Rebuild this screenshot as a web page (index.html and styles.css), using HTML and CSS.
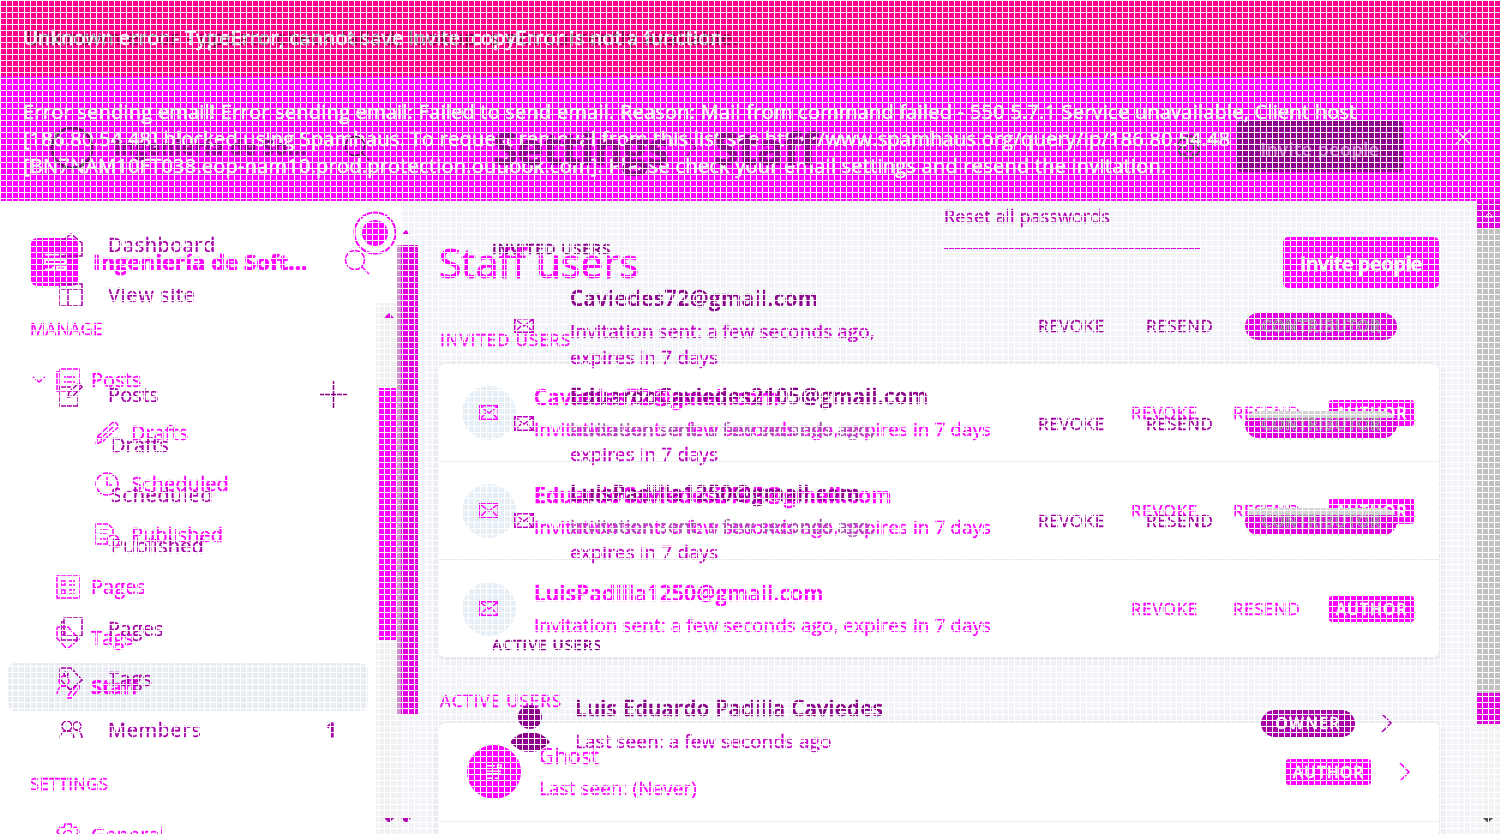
FILE: index.html
```html
<!DOCTYPE html>
<html lang="es">
<head>
<meta charset="utf-8">
<title>Staff users</title>
<link rel="stylesheet" href="styles.css">
</head>
<body>
<svg class="defs" width="0" height="0">
  <symbol id="mail" viewBox="0 0 20 15"><path d="M.7.7h18.6v13.6H.7zM1 1l9 7 9-7M1 14l6-6M19 14l-6-6"/></symbol>
  <symbol id="search" viewBox="0 0 26 26"><circle cx="11" cy="11" r="9.5"/><path d="M18 18l7 7"/></symbol>
  <symbol id="close" viewBox="0 0 18 18"><path d="M1 1l16 16M17 1L1 17"/></symbol>
  <symbol id="chev" viewBox="0 0 12 20"><path d="M1 1l9 9-9 9"/></symbol>
  <symbol id="tag" viewBox="0 0 24 24"><path d="M1 2v10l10 11 12-10L12 1H2z"/><circle cx="7" cy="7" r="2"/></symbol>
  <symbol id="gear" viewBox="0 0 24 24"><circle cx="12" cy="12" r="4.5"/><path d="M9 1h6l1 4 4-1 3 5-3 3 3 3-3 5-4-1-1 4H9l-1-4-4 1-3-5 3-3-3-3 3-5 4 1z"/></symbol>
</svg>
<div class="screen">
  <div class="banners">
    <div class="banner banner-top"></div>
    <div class="banner banner-error"></div>
  </div>

  <div class="app">
    <aside class="side">
      <header class="site">
        <span class="logo"><svg viewBox="0 0 24 20"><path d="M1 2h22M1 8h22v4H1zM1 18h9v-3M14 18h9v-3H14z"/></svg></span>
        <span class="site-name">Ingeniería de Soft...</span>
        <svg class="i26"><use href="#search"/></svg>
      </header>
      <div class="navwrap">
        <nav class="nav">
          <h4>MANAGE</h4>
          <a class="row posts"><svg class="arrow" viewBox="0 0 14 8"><path d="M1 1l6 5 6-5"/></svg><svg class="i24" viewBox="0 0 24 24"><path d="M4 1h19v22H1V4h3M4 1v22M8 9h11M8 14h11"/></svg><span>Posts</span></a>
          <a class="row sub"><svg class="i24" viewBox="0 0 24 24"><path d="M1 23l2-8L17 2q3-2 5 1t-1 5L8 20zM5 18L19 5M3 15l5 5"/></svg><span>Drafts</span></a>
          <a class="row sub"><svg class="i24" viewBox="0 0 24 24"><circle cx="12" cy="12" r="11"/><path d="M12 5v8h5"/></svg><span class="sched">Scheduled</span></a>
          <a class="row sub"><svg class="i24" viewBox="0 0 24 24"><path d="M12 21H1V1h12l5 5v5M5 6h8M5 11h7M5 16h6"/><circle cx="18" cy="18" r="6"/></svg><span>Published</span></a>
          <a class="row pages"><svg class="i24" viewBox="0 0 24 24"><path d="M1 1h22v22H1zM5 6h4v4H5zM5 15h4v4H5zM13 6h6M13 10h6M13 15h6M13 19h6"/></svg><span>Pages</span></a>
          <a class="row tags"><svg class="i24"><use href="#tag"/></svg><span>Tags</span></a>
          <a class="row active"><svg class="i24" viewBox="0 0 24 24"><circle cx="8" cy="6" r="5"/><path d="M1 19q1-8 7-8t7 7M12 23l1-4L22 9l2 3-9 11z"/></svg><span>Staff</span></a>
          <h4 class="settings">SETTINGS</h4>
          <a class="row general"><svg class="i24"><use href="#gear"/></svg><span>General</span></a>
        </nav>
        <div class="bar"><i class="up"></i><div class="thumb"></div><i class="down"></i></div>
      </div>
    </aside>

    <main class="main">
      <header class="title"><h1>Staff users</h1><button>Invite people</button></header>
      <h3>INVITED USERS</h3>
      <section class="card">
        <div class="user"><span class="avatar"><svg><use href="#mail"/></svg></span><div class="who"><b>Caviedes72@gmail.com</b><p>Invitation sent: a few seconds ago, expires in 7 days</p></div><span class="act revoke">REVOKE</span><span class="act resend">RESEND</span><span class="badge">AUTHOR</span></div>
        <div class="user"><span class="avatar"><svg><use href="#mail"/></svg></span><div class="who"><b>EduardoCaviedes2105@gmail.com</b><p>Invitation sent: a few seconds ago, expires in 7 days</p></div><span class="act revoke">REVOKE</span><span class="act resend">RESEND</span><span class="badge">AUTHOR</span></div>
        <div class="user"><span class="avatar"><svg><use href="#mail"/></svg></span><div class="who"><b>LuisPadilla1250@gmail.com</b><p>Invitation sent: a few seconds ago, expires in 7 days</p></div><span class="act revoke">REVOKE</span><span class="act resend">RESEND</span><span class="badge">AUTHOR</span></div>
      </section>
      <h3 class="active-title">ACTIVE USERS</h3>
      <section class="card">
        <div class="user ghost"><span class="avatar"><svg viewBox="0 0 18 18"><path d="M1 2h9M13 1h4v3h-4zM1 8h16M1 11h16M1 16h6M10 16h4"/></svg></span><div class="who"><b>Ghost</b><p>Last seen: (Never)</p></div><span class="badge">AUTHOR</span><svg class="chev"><use href="#chev"/></svg></div>
        <div class="user"></div>
      </section>
    </main>
    <div class="pagebar"><div class="p1"><svg viewBox="0 0 10 6"><path d="M1 5l4-4 4 4z"/></svg></div><div class="p2"></div><div class="p3"></div><i class="down"></i></div>
  </div>

  <div class="classic">
    <aside class="cside">
      <header><svg class="ring" viewBox="0 0 44 44"><circle cx="22" cy="22" r="20"/></svg><span>Ingeniería de So...</span><svg class="i26"><use href="#search"/></svg></header>
      <a class="crow"><svg class="i24" viewBox="0 0 24 24"><path d="M1 10L12 1l11 9v13H1z"/></svg><span>Dashboard</span></a>
      <a class="crow"><svg class="i24" viewBox="0 0 24 24"><path d="M1 1h22v22H1zM1 6h22M9 6v17"/></svg><span class="vs">View site</span></a>
      <a class="crow cposts"><svg class="i24" viewBox="0 0 24 24"><path d="M12 4H1v19h18V12M9 14l1-5L20 0l3 4-9 9z"/></svg><span>Posts</span><svg class="plus" viewBox="0 0 27 27"><path d="M13.500 0v27M0 13.500h27"/></svg></a>
      <a class="crow csub"><span>Drafts</span></a>
      <a class="crow csub"><span class="sch">Scheduled</span></a>
      <a class="crow csub"><span>Published</span></a>
      <a class="crow cpages"><svg class="i24" viewBox="0 0 24 24"><path d="M5 1h18v18H5zM5 5H2v18h16v-4"/></svg><span>Pages</span></a>
      <a class="crow"><svg class="i24"><use href="#tag"/></svg><span>Tags</span></a>
      <a class="crow"><svg class="i24" viewBox="0 0 24 24"><circle cx="8" cy="8" r="5"/><circle cx="18" cy="8" r="4"/><path d="M1 21q0-8 7-8t7 8M16 12q7 0 7 9"/></svg><span class="vs">Members</span><em>1</em></a>
    </aside>
    <svg class="globe" viewBox="0 0 44 44"><circle cx="22" cy="22" r="20.500"/><circle cx="22" cy="22" r="12" class="core"/></svg>
    <div class="cbar"><i class="up"></i><div class="thumb"></div><i class="down"></i></div>
    <div class="cmain">
      <header><h2>Settings</h2><svg class="chev"><use href="#chev"/></svg><h2>Staff</h2><svg class="i24 cog"><use href="#gear"/></svg><button>Invite people</button></header>
      <div class="reset">Reset all passwords</div>
      <h5>INVITED USERS</h5>
      <div class="cuser"><svg class="mail"><use href="#mail"/></svg><div class="cwho"><b class="wide">Caviedes72@gmail.com</b><p>Invitation sent: a few seconds ago,<br>expires in 7 days</p></div><span class="act">REVOKE</span><span class="act cresend">RESEND</span><span class="pill">CONTRIBUTOR</span></div>
      <div class="cuser over"><svg class="mail"><use href="#mail"/></svg><div class="cwho"><b>EduardoCaviedes2105@gmail.com</b><p>Invitation sent: a few seconds ago,<br>expires in 7 days</p></div><span class="act">REVOKE</span><span class="act cresend">RESEND</span><span class="pill">CONTRIBUTOR</span></div>
      <div class="cuser over"><svg class="mail"><use href="#mail"/></svg><div class="cwho"><b>LuisPadilla1250@gmail.com</b><p>Invitation sent: a few seconds ago,<br>expires in 7 days</p></div><span class="act">REVOKE</span><span class="act cresend">RESEND</span><span class="pill">CONTRIBUTOR</span></div>
      <h5 class="cactive">ACTIVE USERS</h5>
      <div class="cowner"><svg class="person" viewBox="0 0 40 48"><circle cx="20" cy="12" r="12"/><path d="M0 37Q8 27 20 27t20 10Q32 47 20 47T0 37z"/></svg><div class="cwho"><b class="own">Luis Eduardo Padilla Caviedes</b><p>Last seen: a few seconds ago</p></div><span class="owner">OWNER</span><svg class="chev"><use href="#chev"/></svg></div>
    </div>
  </div>

  <div class="messages">
    <div class="msg first"><p class="faded">Unknown error - update check failed, lookup is not currently available.</p><p>Unknown error - TypeError, cannot save invite. copyError is not a function</p><svg class="close"><use href="#close"/></svg></div>
    <div class="msg second"><p>Error sending email! Error sending email: Failed to send email. Reason: Mail from command failed - 550 5.7.1 Service unavailable, Client host<br>[186.80.54.48] blocked using Spamhaus. To request removal from this list see http://www.spamhaus.org/query/ip/186.80.54.48<br>[BN7NAM10FT038.eop-nam10.prod.protection.outlook.com]. Please check your email settings and resend the invitation.</p><svg class="close"><use href="#close"/></svg></div>
  </div>
  <div class="mesh"></div>
</div>
</body>
</html>
```
FILE: styles.css
```css
* { box-sizing: border-box; }
body { margin: 0; font: 20px/30px "Open Sans", "Noto Sans", sans-serif; color: #f0f; overflow: hidden; -webkit-text-stroke: .35px currentColor; }
h1, h2, h3, h4, h5, p { margin: 0; font-weight: 400; }
svg { fill: none; stroke: currentColor; stroke-width: 1.5; flex: none; }
.defs { position: absolute; }
b { font-weight: 600; }
button { font: 600 20px/30px "Open Sans", sans-serif; border: 0; padding: 0; }
.i24 { width: 24px; height: 24px; }
.i26 { width: 26px; height: 26px; }
.screen { position: relative; width: 1500px; height: 834px; overflow: hidden; background: #f3f4f8; display: flex; flex-direction: column; }
.banner-top { height: 76px; background: #ff008c; }
.banner-error { height: 125px; background: #f0f; }
.app { display: flex; height: 633px; }
.up, .down { width: 0; height: 0; border: 5px solid transparent; border-top: 0; border-bottom: 5px solid #e000e0; }
.down { border-bottom: 0; border-top: 5px solid #b000b0; }

/* sidebar */
.side { width: 401px; background: #fff; flex: none; }
.site { height: 102px; padding: 19px 31px 0 31px; display: flex; align-items: center; }
.logo { width: 47px; height: 48px; border-radius: 6px; background: #f0f; display: grid; place-items: center; color: #fff; }
.logo svg { width: 22px; height: 20px; stroke-width: 2; }
.site-name { margin-left: 15px; flex: 1; font-size: 22px; font-weight: 700; letter-spacing: .1px; white-space: nowrap; padding-bottom: 1px; -webkit-text-stroke-width: .7px; }
.navwrap { display: flex; height: 531px; overflow: hidden; }
.nav { width: 376px; padding: 11px 8px 0; flex: none; }
.nav h4 { font-size: 17px; letter-spacing: .2px; padding-left: 22px; }
.row { display: flex; align-items: center; gap: 11px; height: 51px; padding-left: 48px; }
.posts { margin-top: 11px; padding-left: 24px; height: 52px; padding-bottom: 2px; }
.posts .arrow { width: 14px; height: 8px; margin-right: -1px; }
.sub { padding-left: 87px; gap: 12px; }
.sched { letter-spacing: .1px; }
.pages { height: 53px; }
.tags { height: 49px; }
.active { background: #e8ecf2; border-radius: 8px; height: 48px; margin-top: 1px; font-weight: 700; }
.nav .settings { padding-top: 58px; }
.general { margin-top: 10px; }
.bar { width: 25px; background: #f1f1f1; display: flex; flex-direction: column; padding-left: 3px; }
.bar .up { margin: 10px 0 0 5px; }
.bar .thumb { width: 18px; height: 252px; margin-top: 70px; background: #f0f; }
.bar .down { margin: 178px 0 0 5px; }

/* staff list */
.main { width: 1076px; padding: 36px 38px 0; flex: none; }
.title { display: flex; justify-content: space-between; align-items: center; height: 51px; }
.title h1 { font-size: 41px; line-height: 50px; letter-spacing: -.2px; padding-bottom: 1px; -webkit-text-stroke-width: .9px; }
.title button { width: 156px; height: 51px; border-radius: 5px; background: #f0f; color: #fff; letter-spacing: -.26px; padding-top: 3px; -webkit-text-stroke: .9px #fff; }
.main h3 { font-size: 17px; letter-spacing: .95px; padding: 37px 0 0 1px; height: 76px; }
.main .active-title { padding-top: 29px; height: 66px; }
.card { background: #fff; border-radius: 6px; box-shadow: 0 1px 8px rgba(60, 60, 80, .14); }
.user { height: 98px; display: flex; align-items: center; padding-left: 23px; padding-right: 25px; border-bottom: 1px solid #e6e9ee; }
.user:last-child { height: 97px; border-bottom: 0; }
.avatar { width: 54px; height: 54px; border-radius: 50%; background: #e6eef6; display: grid; place-items: center; }
.avatar svg { width: 20px; height: 15px; }
.who { margin-left: 18px; flex: 1; white-space: nowrap; line-height: 32px; }
.user b { font-size: 21px; letter-spacing: .38px; display: block; -webkit-text-stroke-width: .6px; }
.who p { font-size: 19px; letter-spacing: .03px; }
.act { font-size: 17px; letter-spacing: .6px; }
.revoke { width: 102px; }
.resend { width: 96px; }
.badge { width: 85px; height: 26px; border-radius: 3px; background: #f0f; color: #fff; font-size: 16px; font-weight: 600; line-height: 26px; letter-spacing: .9px; text-align: center; }
.ghost { height: 99px; padding-left: 28px; padding-right: 28px; }
.ghost .avatar { background: #f0f; color: #fff; }
.ghost .avatar svg { width: 16px; height: 18px; }
.ghost b { font-weight: 400; }
.chev { width: 12px; height: 20px; }
.ghost .chev { margin-left: 28px; }

/* page scrollbar */
.pagebar { width: 23px; background: #f3f3f5; }
.p1 { height: 27px; background: #e000e0; display: grid; place-items: center; color: #fff; }
.p1 svg { width: 10px; height: 6px; stroke-width: 1; }
.p2 { height: 465px; background: #c1c1c1; }
.p3 { height: 31px; background: #e000e0; }
.pagebar .down { display: block; margin: 94px 0 0 6px; border-top-color: #505050; }

/* classic layout, stacked over the current one */
.classic { position: absolute; inset: 0; color: #a800a8; display: flex; }
.cside { width: 397px; flex: none; padding-left: 59px; }
.cside header { height: 220px; padding-top: 76px; display: flex; align-items: center; font-size: 21px; font-weight: 700; letter-spacing: .4px; color: #8c008c; position: relative; z-index: 1; mix-blend-mode: multiply; }
.cside header span { width: 194px; margin-left: 20px; white-space: nowrap; padding-bottom: 2px; -webkit-text-stroke-width: .6px; }
.ring { width: 44px; height: 44px; margin-left: -9px; color: #777; stroke-width: 3; }
.cside header .i26 { margin-left: 36px; color: #505; stroke-width: 1.500; }
.crow { display: flex; align-items: center; height: 50.300px; gap: 25px; letter-spacing: .5px; }
.crow .vs { letter-spacing: .65px; }
.crow em { margin-left: 99px; font-style: normal; font-weight: 600; -webkit-text-stroke-width: 1px; }
.cposts { margin-top: 49px; letter-spacing: .1px; }
.plus { width: 27px; height: 27px; margin-left: 136px; color: #808; }
.csub { padding-left: 52px; letter-spacing: .1px; }
.csub .sch { letter-spacing: .6px; }
.cpages { margin-top: 33px; letter-spacing: .2px; }
.globe { position: absolute; left: 353px; top: 211px; width: 44px; height: 44px; color: #f0f; stroke-width: 2; }
.globe .core { fill: #f0f; }
.cbar { width: 21px; padding-top: 230px; display: flex; flex-direction: column; flex: none; }
.cbar .up { margin-left: 4px; }
.cbar .thumb { height: 469px; margin-top: 10px; background: #e000e0; border-left: 4px solid #d090cc; }
.cbar .down { margin: 104px 0 0 4px; }
.cmain { width: 985px; padding-left: 75px; color: #c400c4; }
.cmain header { display: flex; align-items: center; width: 910px; height: 201px; padding-top: 92px; color: #8c008c; }
.cmain h2 { font-size: 45px; line-height: 50px; font-weight: 700; letter-spacing: -.69px; padding-top: 2px; -webkit-text-stroke-width: .6px; position: relative; z-index: 1; mix-blend-mode: multiply; }
.cmain header .chev { margin: 0 16px 0 17px; }
.cog { margin: 0 36px 0 auto; color: #444; }
.cmain header button { width: 166px; height: 51px; background: #8c008c; border-radius: 4px; color: #d07ad0; font-size: 18px; letter-spacing: .47px; padding-top: 5px; }
.reset { width: 256px; height: 48px; margin-left: 451px; border-bottom: 1px solid #e000e0; font-size: 18px; letter-spacing: .07px; color: #b400b4; }
.cmain h5 { font-size: 15px; font-weight: 600; letter-spacing: .9px; color: #8c008c; margin: -16px 0 0 -1px; height: 31px; }
.cuser { height: 97.500px; display: flex; padding: 19px 0 0 21px; }
.cuser .mail { width: 20px; height: 15px; margin-top: 35px; }
.cwho { width: 468px; margin-left: 36px; white-space: nowrap; }
.cwho b { display: block; font-size: 21px; letter-spacing: .4px; color: #8c008c; -webkit-text-stroke-width: .5px; }
.cwho .wide { letter-spacing: .55px; }
.cwho .own { letter-spacing: .27px; }
.cwho p { font-size: 19px; line-height: 25.500px; padding-top: 6px; letter-spacing: .04px; }
.cuser .act { width: 108px; margin-top: 28px; color: #a000a0; }
.cuser .cresend { width: 99px; }
.pill { width: 152px; height: 27px; margin-top: 30px; border-radius: 14px; background: #e000e0; color: #86408c; font-size: 16px; font-weight: 600; line-height: 27px; letter-spacing: .5px; text-align: center; -webkit-text-stroke: .8px #c0b0c4; }
.over .pill { background: linear-gradient(#d3d3d3 7px, #e000e0 7px); }
.over .cwho p::first-line { color: #a455ac; }
.cmain .cactive { margin-top: 72px; }
.cowner { display: flex; padding: 33px 0 0 17px; }
.person { width: 40px; height: 48px; margin-top: 12px; fill: #8c008c; stroke: none; }
.cowner .cwho { margin-left: 25px; width: 686px; }
.owner { width: 94px; height: 27px; margin-top: 17px; border-radius: 14px; background: #a800a8; color: #fff; font-size: 16px; font-weight: 600; line-height: 27px; letter-spacing: 1.200px; text-align: center; }
.cowner .chev { margin: 20px 0 0 26px; color: #a800a8; }

/* banner copy */
.messages { position: absolute; inset: 0 0 auto; color: #fff; white-space: nowrap; -webkit-text-stroke: .5px #fff; }
.msg { display: flex; justify-content: space-between; align-items: center; padding: 0 28px 0 23px; letter-spacing: .23px; }
.first { height: 76px; letter-spacing: .18px; }
.faded { position: absolute; z-index: 1; left: 26px; color: #777; letter-spacing: .85px; -webkit-text-stroke: 0; mix-blend-mode: multiply; }
.second { height: 125px; line-height: 27px; }
.close { width: 18px; height: 18px; margin-top: -3px; stroke-width: 1.2; }
.first .close { color: #c080e0; }

/* white mesh */
.mesh { position: absolute; z-index: 2; inset: 0; background: linear-gradient(90deg, #fff 1px, transparent 1px), linear-gradient(#fff 1px, transparent 1px); background-size: 6px 6px; }
```
